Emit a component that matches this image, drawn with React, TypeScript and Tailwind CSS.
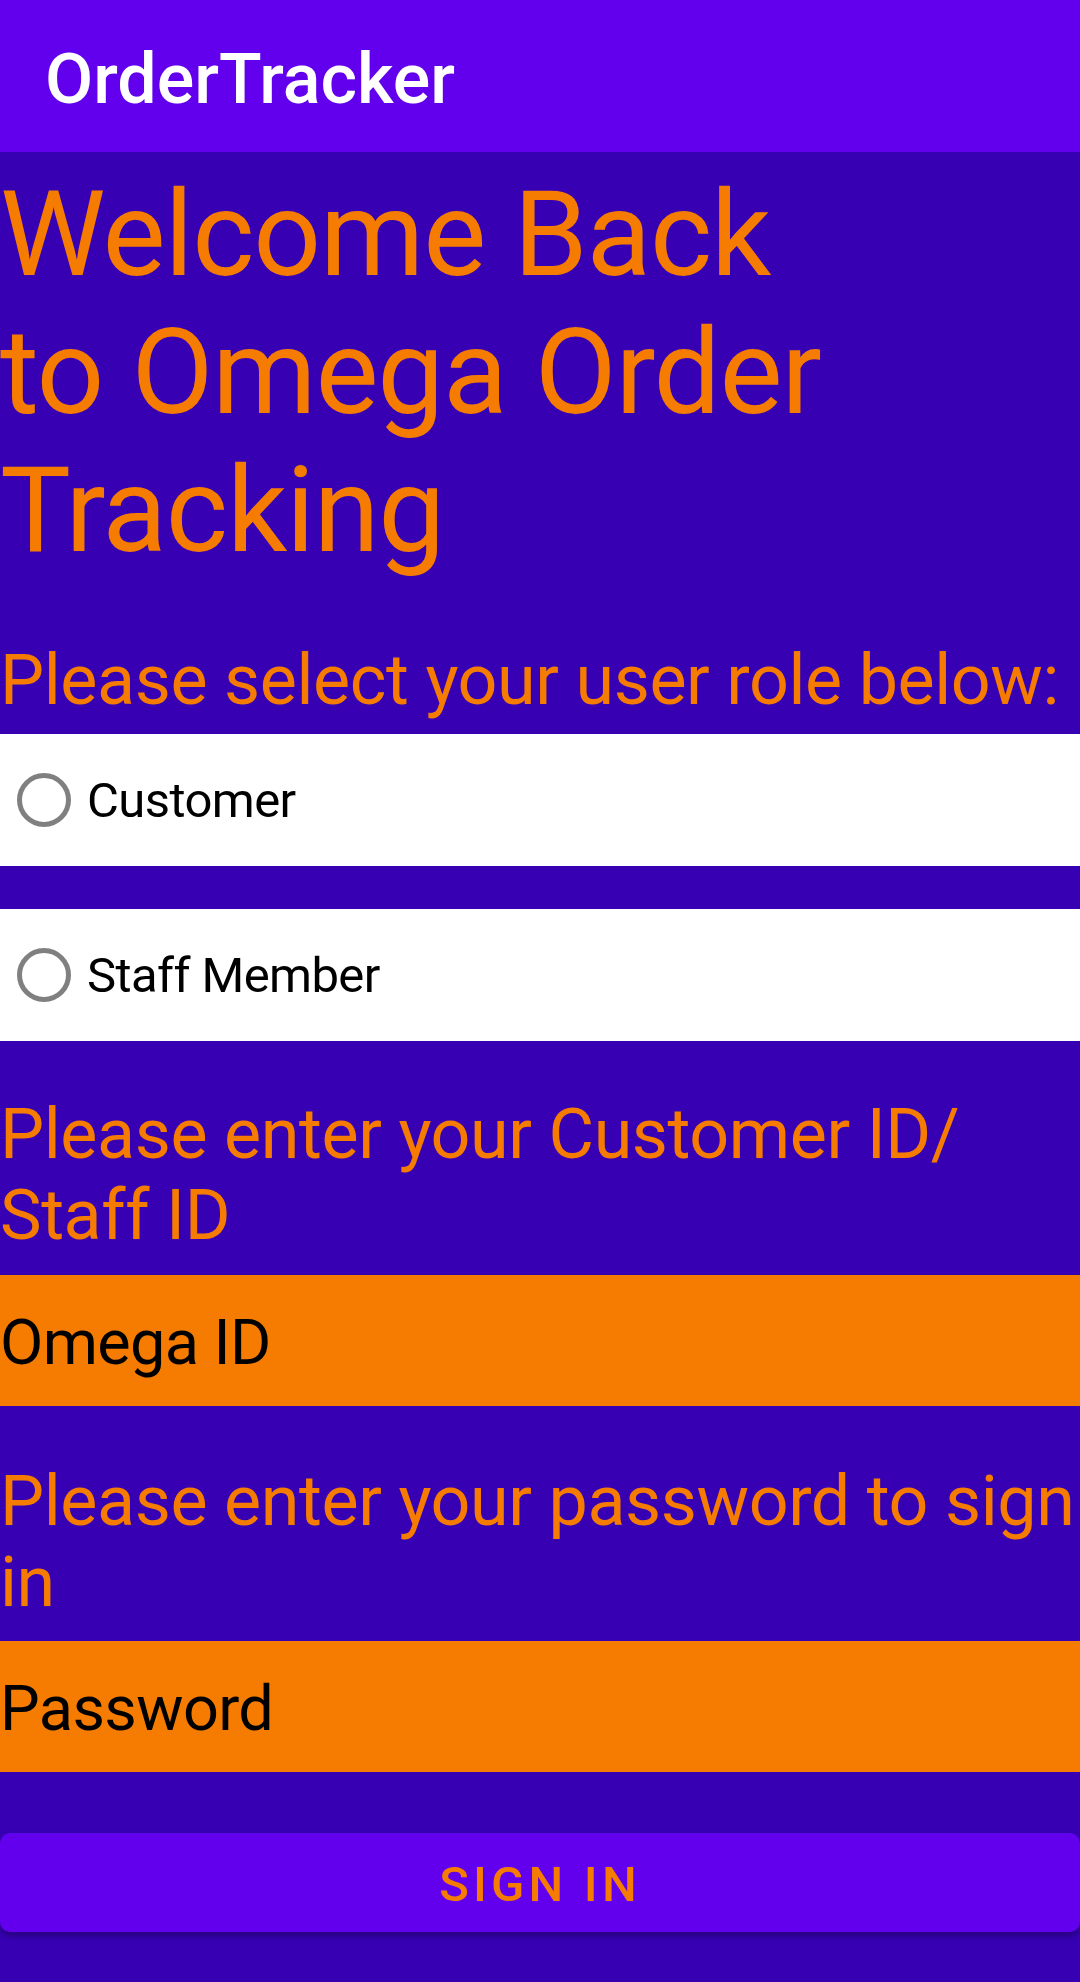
export default function App() {
  return (
    <div className="min-h-[1982px] w-[1080px] bg-[#3700B3] font-['Roboto',sans-serif]">
      {/* Top app bar */}
      <header className="flex h-[152px] items-center bg-[#6200EE] pl-[45px] pt-[6px]">
        <h1 className="text-[70px] font-medium text-white">OrderTracker</h1>
      </header>

      {/* Heading */}
      <h2 className="mt-[14px] whitespace-nowrap text-[119px] leading-[138px] tracking-[-0.01em] text-[#F57C00]">
        Welcome Back
        <br />
        to Omega Order
        <br />
        Tracking
      </h2>

      {/* Role selection */}
      <p className="mt-[60px] whitespace-nowrap text-[70px] leading-[81px] tracking-[-0.006em] text-[#F57C00]">
        Please select your user role below:
      </p>
      <div className="mt-[13px] flex flex-col gap-[43px]">
        {["Customer", "Staff Member"].map((role) => (
          <label key={role} className="flex h-[132px] items-center bg-white pl-[17px]">
            <span className="h-[54px] w-[54px] rounded-full border-[5px] border-[#808080]" />
            <span className="ml-[16px] pt-[2px] text-[49px] tracking-[-0.012em] text-black">{role}</span>
          </label>
        ))}
      </div>

      {/* ID field */}
      <p className="mt-[53px] whitespace-nowrap text-[70px] leading-[81px] tracking-[-0.006em] text-[#F57C00]">
        Please enter your Customer ID/
        <br />
        Staff ID
      </p>
      <div className="mt-[19px] flex h-[131px] items-center bg-[#F57C00] pt-[6px]">
        <span className="text-[63px] tracking-[-0.01em] text-black">Omega ID</span>
      </div>

      {/* Password field */}
      <p className="mt-[55px] whitespace-nowrap text-[70px] leading-[81px] tracking-[-0.006em] text-[#F57C00]">
        Please enter your password to sign
        <br />
        in
      </p>
      <div className="mt-[18px] flex h-[131px] items-center bg-[#F57C00] pt-[6px]">
        <span className="text-[63px] tracking-[-0.01em] text-black">Password</span>
      </div>

      {/* Sign in button */}
      <button className="mt-[61px] flex h-[99px] w-full items-center justify-center rounded-[10px] bg-[#6200EE] pt-[4px] shadow-[0_4px_6px_rgba(0,0,0,0.3)]">
        <span className="text-[49px] font-medium uppercase tracking-[0.085em] text-[#F57C00]">Sign in</span>
      </button>
    </div>
  );
}
